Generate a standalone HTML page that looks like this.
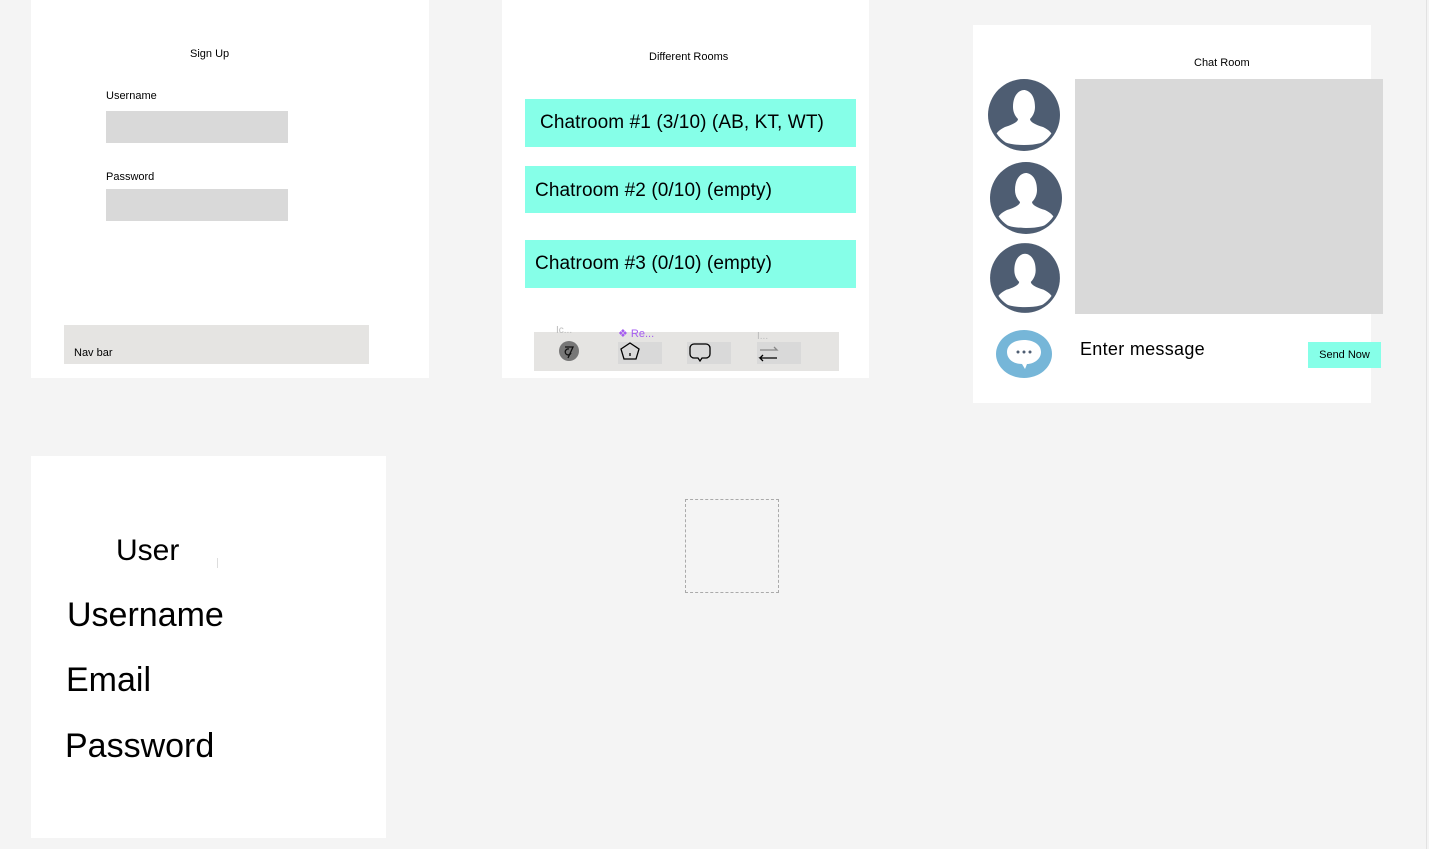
<!DOCTYPE html><html><head><style>
body{margin:0;width:1429px;height:849px;background:#f4f4f4;position:relative;overflow:hidden;font-family:"Liberation Sans",sans-serif;color:#000}
.a{position:absolute}
.f{position:absolute;background:#fff}
.g{position:absolute;background:#d9d9d9}
.c{position:absolute;background:#86ffe8;font-size:19px;line-height:48px;letter-spacing:0.1px}
</style></head><body>
<div class="a" style="left:1426px;top:0;width:1px;height:849px;background:#e2e2e2"></div>
<div class="f" style="left:31px;top:0;width:398px;height:378px"></div>
<div class="a" style="left:190px;top:48px;font-size:11px">Sign Up</div>
<div class="a" style="left:106px;top:90px;font-size:11px">Username</div>
<div class="g" style="left:106px;top:111px;width:182px;height:32px"></div>
<div class="a" style="left:106px;top:171px;font-size:11px">Password</div>
<div class="g" style="left:106px;top:189px;width:182px;height:32px"></div>
<div class="a" style="left:64px;top:325px;width:305px;height:39px;background:#e5e4e2"></div>
<div class="a" style="left:74px;top:347px;font-size:11px">Nav bar</div>

<div class="f" style="left:502px;top:0;width:367px;height:378px"></div>
<div class="a" style="left:649px;top:51px;font-size:11px">Different Rooms</div>
<div class="c" style="left:525px;top:99px;width:331px;height:48px;text-indent:15px">Chatroom #1 (3/10) (AB, KT, WT)</div>
<div class="c" style="left:525px;top:166px;width:331px;height:47px;text-indent:10px;line-height:50px">Chatroom #2 (0/10) (empty)</div>
<div class="c" style="left:525px;top:240px;width:331px;height:48px;text-indent:10px">Chatroom #3 (0/10) (empty)</div>
<div class="a" style="left:534px;top:332px;width:305px;height:39px;background:#e5e4e2"></div>
<div class="a" style="left:556px;top:325px;font-size:10px;color:#bbb">Ic...</div>
<div class="a" style="left:618px;top:327px;font-size:11px;color:#a55cf0">❖ Re...</div>
<div class="a" style="left:757px;top:331px;font-size:10px;color:#bbb">I...</div>
<div class="g" style="left:618px;top:342px;width:44px;height:22px"></div>
<div class="g" style="left:687px;top:342px;width:44px;height:22px"></div>
<div class="g" style="left:757px;top:342px;width:44px;height:22px"></div>
<svg class="a" style="left:530px;top:330px" width="300" height="40" viewBox="530 330 300 40" fill="none" stroke="#000" stroke-width="1.3">
<circle cx="569" cy="351" r="10" fill="#777" stroke="none"/><path d="M565 347h8l-5 11M569 349a3 3 0 1 0 2 4" stroke="#111"/>
<path d="M630 343l9 6-3 10h-12l-3-10z"/><path d="M630 353v3"/>
<path d="M694 344h12a4 4 0 0 1 4 4v6a4 4 0 0 1-4 4h-4l-2 3-2-3h-4a4 4 0 0 1-4-4v-6a4 4 0 0 1 4-4z"/>
<path d="M760 350h17l-3-3" stroke="#888"/><path d="M777 358h-17l3 3M760 358l3-3"/>
</svg>

<div class="f" style="left:973px;top:25px;width:398px;height:378px"></div>
<div class="a" style="left:1194px;top:57px;font-size:11px">Chat Room</div>
<div class="g" style="left:1075px;top:79px;width:308px;height:235px"></div>
<svg class="a" style="left:980px;top:70px" width="100" height="320" viewBox="980 70 100 320">
<defs><clipPath id="cp"><circle r="33"/></clipPath>
<g id="av"><circle r="36" fill="#4e5d72"/><path clip-path="url(#cp)" d="M-11-8c0-13 7-17 11-17s11 4 11 17c0 6-3 10-5 12c0 3 6 6 13 8c6 3 9 6 10 10c-8 6-17 8-29 8s-21-2-29-8c1-4 4-7 10-10c7-2 13-5 13-8c-2-2-5-6-5-12z" fill="#fff"/></g></defs>
<use href="#av" x="1024" y="115"/><use href="#av" x="1026" y="198"/>
<g transform="translate(1025 278) scale(.97)"><use href="#av"/></g>
<ellipse cx="1024" cy="354" rx="28" ry="24" fill="#76b6d8"/>
<path d="M1024 340c10 0 17 5 17 12s-7 12-14 12l-2 5-3-5c-9 0-15-5-15-12s7-12 17-12z" fill="#fff"/>
<circle cx="1018" cy="352" r="1.5" fill="#4e5d72"/><circle cx="1024" cy="352" r="1.5" fill="#4e5d72"/><circle cx="1030" cy="352" r="1.5" fill="#4e5d72"/>
</svg>
<div class="a" style="left:1080px;top:339px;font-size:18px;letter-spacing:0.3px">Enter message</div>
<div class="a" style="left:1308px;top:342px;width:73px;height:26px;background:#86ffe8;font-size:11px;line-height:27px;text-align:center">Send Now</div>

<div class="f" style="left:31px;top:456px;width:355px;height:382px"></div>
<div class="a" style="left:116px;top:534px;font-size:30px">User</div>
<div class="a" style="left:217px;top:558px;width:1px;height:10px;background:#ddd"></div>
<div class="a" style="left:67px;top:596px;font-size:34px">Username</div>
<div class="a" style="left:66px;top:661px;font-size:34px">Email</div>
<div class="a" style="left:65px;top:727px;font-size:34px">Password</div>
<div class="a" style="left:685px;top:499px;width:92px;height:92px;border:1.5px dashed #aaa"></div>
</body></html>
